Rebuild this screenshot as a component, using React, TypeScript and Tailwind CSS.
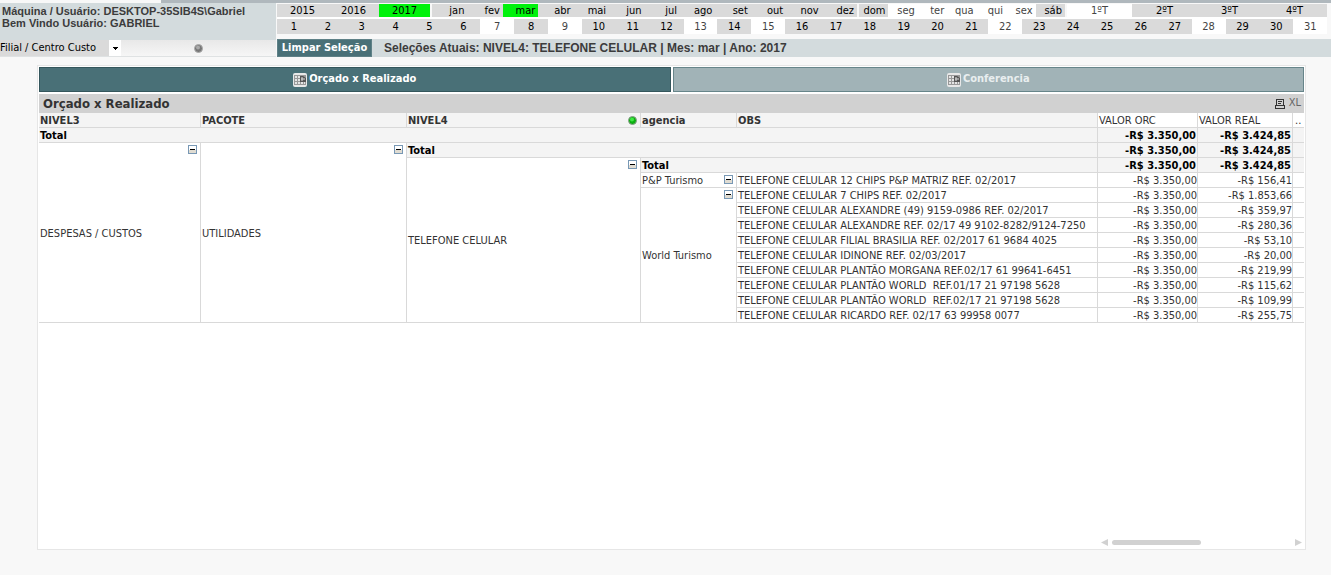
import { useState } from "react";

type DayCell = { label: string; off?: boolean; selected?: boolean };

const years: DayCell[] = [
  { label: "2015" },
  { label: "2016" },
  { label: "2017", selected: true },
];

const months: DayCell[] = [
  "jan", "fev", "mar", "abr", "mai", "jun", "jul", "ago", "set", "out", "nov", "dez",
].map((label) => ({ label, selected: label === "mar" }));

const weekdays: DayCell[] = ["dom", "seg", "ter", "qua", "qui", "sex", "sáb"].map((label) => ({
  label,
  off: label !== "dom" && label !== "sáb",
}));

const quarters: DayCell[] = [
  { label: "1ºT", off: true },
  { label: "2ºT" },
  { label: "3ºT" },
  { label: "4ºT" },
];

const daysOff = [7, 9, 13, 15, 22, 28, 31];
const days: DayCell[] = Array.from({ length: 31 }, (_, i) => ({
  label: String(i + 1),
  off: daysOff.includes(i + 1),
}));

const rows = [
  { obs: "TELEFONE CELULAR 12 CHIPS P&P MATRIZ REF. 02/2017", real: "-R$ 156,41" },
  { obs: "TELEFONE CELULAR 7 CHIPS REF. 02/2017", real: "-R$ 1.853,66" },
  { obs: "TELEFONE CELULAR ALEXANDRE (49) 9159-0986 REF. 02/2017", real: "-R$ 359,97" },
  { obs: "TELEFONE CELULAR ALEXANDRE REF. 02/17 49 9102-8282/9124-7250", real: "-R$ 280,36" },
  { obs: "TELEFONE CELULAR FILIAL BRASILIA REF. 02/2017 61 9684 4025", real: "-R$ 53,10" },
  { obs: "TELEFONE CELULAR IDINONE REF. 02/03/2017", real: "-R$ 20,00" },
  { obs: "TELEFONE CELULAR PLANTÃO MORGANA REF.02/17 61 99641-6451", real: "-R$ 219,99" },
  { obs: "TELEFONE CELULAR PLANTÃO WORLD  REF.01/17 21 97198 5628", real: "-R$ 115,62" },
  { obs: "TELEFONE CELULAR PLANTÃO WORLD  REF.02/17 21 97198 5628", real: "-R$ 109,99" },
  { obs: "TELEFONE CELULAR RICARDO REF. 02/17 63 99958 0077", real: "-R$ 255,75" },
];

const cell = "h-[15px] border-b border-r border-[#d9d9d9] p-0 pt-px pl-px text-left leading-[13px] whitespace-pre";
const headCell = `${cell} bg-[#f4f4f4] font-bold`;
const totalCell = `${cell} bg-[#f4f4f4] font-bold text-black`;
const moneyTotal = "h-[15px] border-b border-r border-[#d9d9d9] bg-[#f4f4f4] p-0 pt-px pr-px text-right font-bold leading-[13px] text-black";
const money = "h-[15px] border-b border-r border-[#d9d9d9] p-0 pt-px text-right leading-[13px]";
const lastCell = "h-[15px] border-b border-[#d9d9d9] p-0";

function ListBox({ items, className, align }: { items: DayCell[]; className: string; align: string }) {
  return (
    <div className={`flex ${className}`}>
      {items.map((item) => (
        <button
          key={item.label}
          className={`min-w-0 flex-1 ${align} ${
            item.selected ? "bg-[#00f20c] text-black" : item.off ? "bg-white text-[#444]" : "bg-[#dadada] text-black"
          }`}
        >
          {item.label}
        </button>
      ))}
    </div>
  );
}

function Toggle({ label }: { label: string }) {
  return (
    <button aria-label={label} className="absolute top-0.5 right-[3px] block">
      <svg width="9" height="9" viewBox="0 0 9 9" shapeRendering="crispEdges">
        <rect width="9" height="9" fill="#7898b5" />
        <rect x="1" y="1" width="7" height="4" fill="#fff" />
        <rect x="1" y="5" width="7" height="3" fill="#e0dcd2" />
        <rect x="2" y="4" width="5" height="1" fill="#000" />
      </svg>
    </button>
  );
}

function TableIcon() {
  return (
    <svg width="14" height="14" viewBox="0 0 14 14">
      <rect width="14" height="14" rx="2" fill="#e8e8e8" />
      <rect x="1" y="2" width="12" height="10" fill="#999" />
      <path d="M2 3h2v2H2zM5 3h2v2H5zM2 6h2v2H2zM5 6h2v2H5zM2 9h2v2H2zM5 9h2v2H5zM8 9h2v2H8zM11 9h1v2h-1z" fill="#e4e4e4" />
      <path d="M7 3h3l3 2v4H7z" fill="#555" />
      <path d="M9 4v4M8 6h4" stroke="#ddd" strokeWidth="1" />
    </svg>
  );
}

export default function App() {
  const [tab, setTab] = useState("orcado");

  return (
    <div className="min-h-screen bg-[#f8f8f8] pb-[25px] font-['DejaVu_Sans_Condensed','DejaVu_Sans',sans-serif] text-[11px] text-[#333]">
      <div className="flex h-[3px] bg-[#b0b8bd]">
        <div className="w-[161px] bg-[#f8f8f8]" />
      </div>

      <header className="flex">
        {/* User info and branch filter */}
        <div className="w-[276px] shrink-0">
          <div className="h-[37px] bg-[#d3dbdd] pt-0.5 pl-0.5 font-['Liberation_Sans',Arial,sans-serif] text-[11px] leading-3 font-bold text-[#3c3c3c]">
            <p>Máquina / Usuário: DESKTOP-35SIB4S\Gabriel</p>
            <p>Bem Vindo Usuário: GABRIEL</p>
          </div>
          <div className="flex h-[17px] items-center border-b border-[#dfe2e3] bg-linear-to-b from-[#e8e8e8] to-[#f6f6f6]">
            <div className="relative h-4 w-[121px]">
              <select
                aria-label="Filial / Centro Custo"
                className="block h-4 w-full appearance-none bg-[#dadada] p-0 text-[11px] leading-4 text-black"
              >
                <option>Filial / Centro Custo</option>
              </select>
              <span className="pointer-events-none absolute inset-y-0 right-0 flex w-3 items-center justify-center bg-white">
                <svg width="5" height="3" viewBox="0 0 5 3" shapeRendering="crispEdges">
                  <path d="M0 0h5v1H0zM1 1h3v1H1zM2 2h1v1H2z" fill="#000" />
                </svg>
              </span>
            </div>
            <span className="flex flex-1 justify-center">
              <svg width="9" height="9" viewBox="0 0 9 9">
                <circle cx="4.500" cy="4.500" r="4" fill="#777" stroke="#aaa" />
                <circle cx="4" cy="3.500" r="2" fill="#aaa" />
              </svg>
            </span>
          </div>
        </div>

        {/* Date list boxes and current selections */}
        <div className="min-w-0 flex-1 pl-px">
          <div className="pr-1">
            <div className="flex gap-0.5 border-b-2 border-white pt-px leading-[13px]">
              <ListBox items={years} className="w-[153px]" align="text-center" />
              <ListBox items={months} className="w-[425px]" align="pr-[3px] text-right" />
              <ListBox items={weekdays} className="w-[206px]" align="pr-[3px] text-right" />
              <ListBox items={quarters} className="flex-1" align="text-center" />
            </div>
            <ListBox items={days} className="leading-[15px]" align="text-center" />
          </div>
          <div className="mt-[5px] flex h-[18px] items-center bg-[#d3dbdd]">
            <button className="h-[18px] w-[95px] border border-[#5f8187] bg-[#497077] leading-4 font-bold text-white">
              Limpar Seleção
            </button>
            <p className="pl-3 font-['Liberation_Sans',Arial,sans-serif] text-xs font-bold text-[#3c3c3c]">
              Seleções Atuais: NIVEL4: TELEFONE CELULAR | Mes: mar | Ano: 2017
            </p>
          </div>
        </div>
      </header>

      <main className="mt-2 mr-[25px] ml-[37px] flex min-h-[485px] flex-col border border-[#e6e6e6] bg-white p-px">
        <div className="flex gap-0.5" role="tablist">
          <button
            role="tab"
            aria-selected={tab === "orcado"}
            onClick={() => setTab("orcado")}
            className="flex h-[25px] flex-1 items-center justify-center gap-0.5 border border-[#34565c] bg-[#497077] font-bold text-white"
          >
            <TableIcon />
            Orçado x Realizado
          </button>
          <button
            role="tab"
            aria-selected={tab === "conferencia"}
            onClick={() => setTab("conferencia")}
            className="flex h-[25px] flex-1 items-center justify-center gap-0.5 border border-[#67858a] bg-[#a1b3b7] font-bold text-[#e9eeef]"
          >
            <TableIcon />
            Conferencia
          </button>
        </div>

        <div className="mt-0.5 flex h-[19px] items-center justify-between bg-[#d1d1d1] pr-[3px] pl-1">
          <h2 className="text-[13px] leading-[17px] font-bold">Orçado x Realizado</h2>
          <div className="flex items-center gap-1">
            <button aria-label="Imprimir">
              <svg width="10" height="10" viewBox="0 0 10 10" fill="none" stroke="#333" shapeRendering="crispEdges">
                <path d="M1.500 6.500V.5h7v6M.5 6.500h9v3h-9zM3 2.500h4M3 4.500h3" />
              </svg>
            </button>
            <button className="text-[#666]">XL</button>
          </div>
        </div>

        <table className="w-full table-fixed border-separate border-spacing-0">
          <colgroup>
            <col className="w-[162px]" />
            <col className="w-[206px]" />
            <col className="w-[234px]" />
            <col className="w-[96px]" />
            <col />
            <col className="w-[100px]" />
            <col className="w-[95px]" />
            <col className="w-[11px]" />
          </colgroup>
          <thead>
            <tr>
              <th className={headCell}>NIVEL3</th>
              <th className={headCell}>PACOTE</th>
              <th className={headCell}>
                <div className="flex items-center justify-between pr-[3px]">
                  NIVEL4
                  <svg width="9" height="9" viewBox="0 0 9 9">
                    <circle cx="4.500" cy="4.500" r="4" fill="#0cb010" stroke="#8c9c8c" />
                    <circle cx="4" cy="3.500" r="2" fill="#3fe843" />
                  </svg>
                </div>
              </th>
              <th className={headCell}>agencia</th>
              <th className={headCell}>OBS</th>
              <th className={`${cell} font-normal`}>VALOR ORC</th>
              <th className={`${cell} font-normal`}>VALOR REAL</th>
              <th className={`${lastCell} pt-px pl-0.5 text-left leading-[13px] font-normal`}>..</th>
            </tr>
          </thead>
          <tbody>
            <tr>
              <td colSpan={5} className={totalCell}>Total</td>
              <td className={moneyTotal}>-R$ 3.350,00</td>
              <td className={moneyTotal}>-R$ 3.424,85</td>
              <td className={`${lastCell} bg-[#f4f4f4]`} />
            </tr>
            <tr>
              <td rowSpan={12} className={`${cell} relative`}>
                DESPESAS / CUSTOS
                <Toggle label="Recolher NIVEL3" />
              </td>
              <td rowSpan={12} className={`${cell} relative`}>
                UTILIDADES
                <Toggle label="Recolher PACOTE" />
              </td>
              <td colSpan={3} className={totalCell}>Total</td>
              <td className={moneyTotal}>-R$ 3.350,00</td>
              <td className={moneyTotal}>-R$ 3.424,85</td>
              <td className={`${lastCell} bg-[#f4f4f4]`} />
            </tr>
            <tr>
              <td rowSpan={11} className={`${cell} relative`}>
                TELEFONE CELULAR
                <Toggle label="Recolher NIVEL4" />
              </td>
              <td colSpan={2} className={totalCell}>Total</td>
              <td className={moneyTotal}>-R$ 3.350,00</td>
              <td className={moneyTotal}>-R$ 3.424,85</td>
              <td className={`${lastCell} bg-[#f4f4f4]`} />
            </tr>
            {rows.map((row, index) => (
              <tr key={row.obs}>
                {index === 0 && (
                  <td className={`${cell} relative`}>
                    P&P Turismo
                    <Toggle label="Recolher P&P Turismo" />
                  </td>
                )}
                {index === 1 && (
                  <td rowSpan={9} className={`${cell} relative`}>
                    World Turismo
                    <Toggle label="Recolher World Turismo" />
                  </td>
                )}
                <td className={cell}>{row.obs}</td>
                <td className={money}>-R$ 3.350,00</td>
                <td className={money}>{row.real}</td>
                <td className={lastCell} />
              </tr>
            ))}
          </tbody>
        </table>

        {/* Horizontal scroll */}
        <div className="mt-auto mb-0.5 ml-auto flex h-2 w-[203px] items-center pr-0.5">
          <svg width="7" height="7" viewBox="0 0 7 7">
            <path d="M7 0v7L0 3.500z" fill="#d1d1d1" />
          </svg>
          <div className="ml-1 h-[5px] w-[89px] rounded-full bg-[#d1d1d1]" />
          <svg width="7" height="7" viewBox="0 0 7 7" className="ml-auto">
            <path d="M0 0v7l7-3.500z" fill="#d1d1d1" />
          </svg>
        </div>
      </main>
    </div>
  );
}
